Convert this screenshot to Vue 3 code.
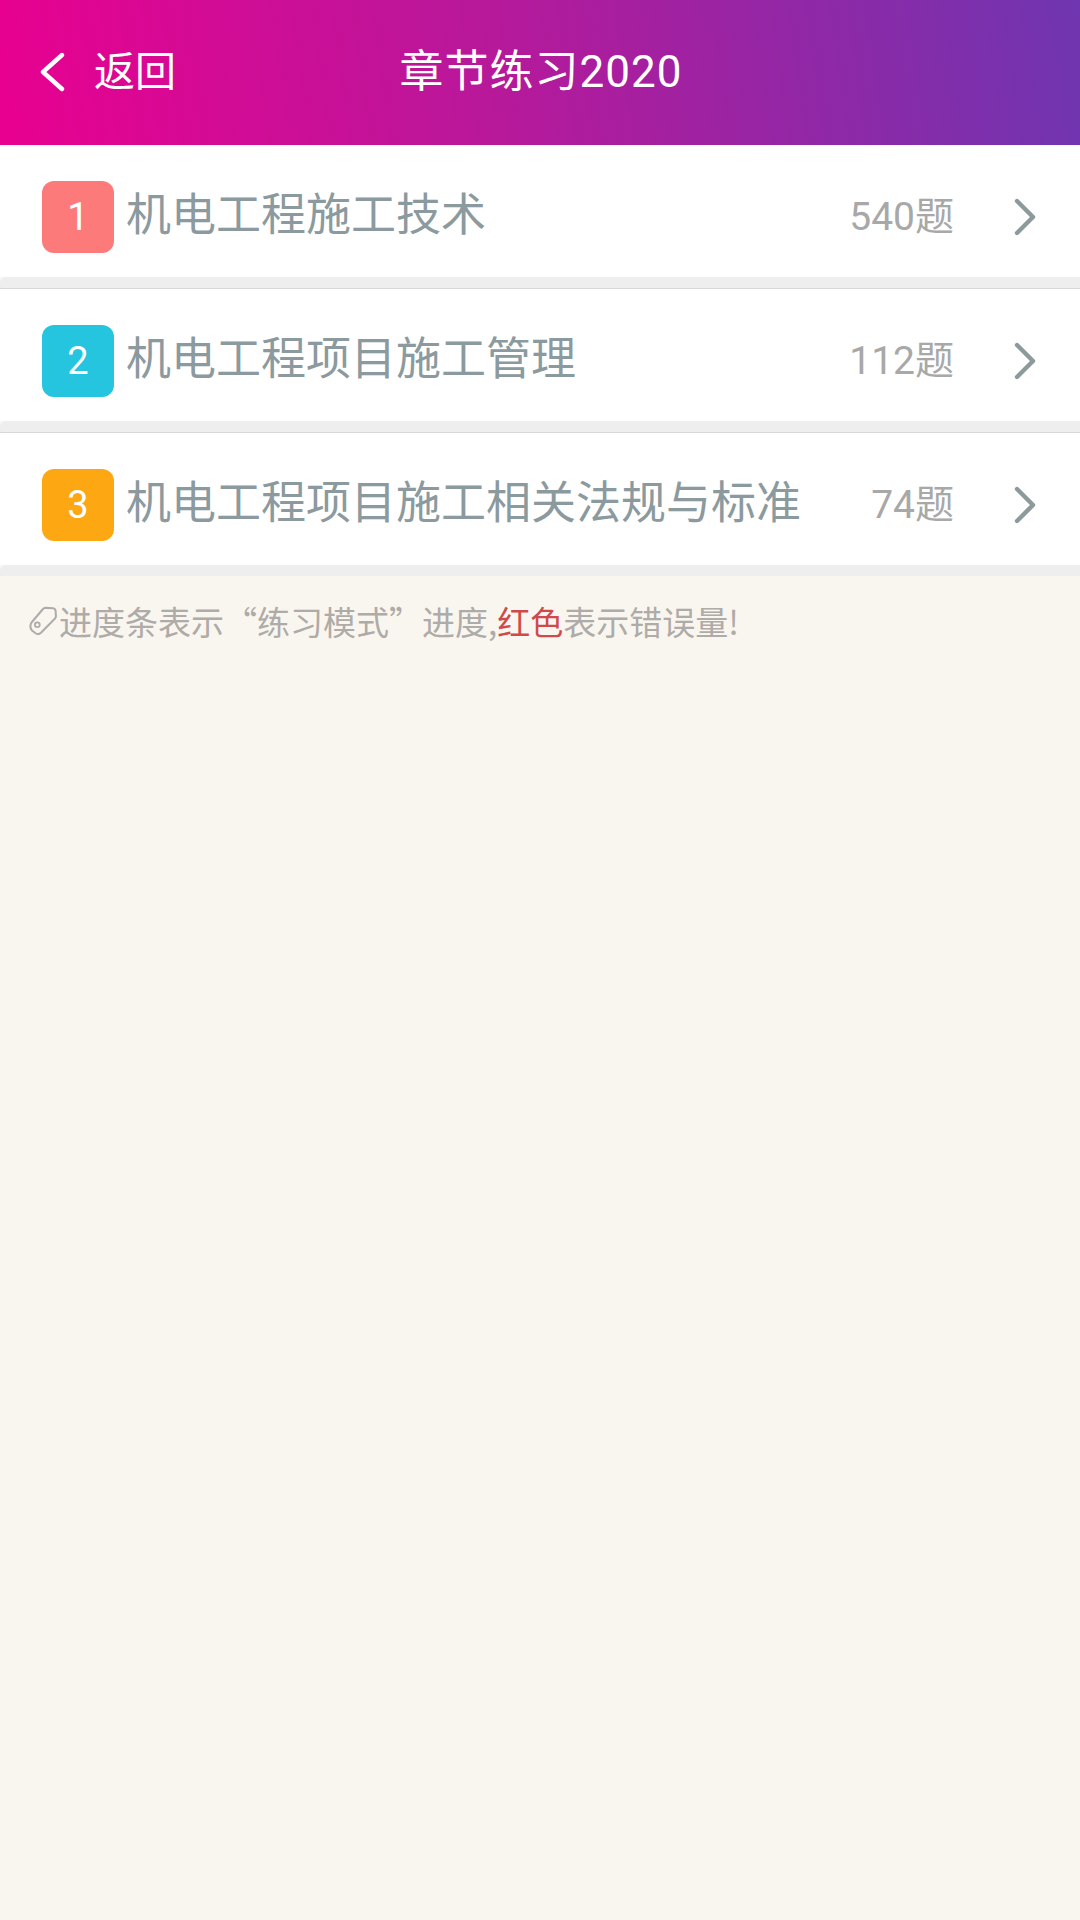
<script setup>
const items = [
  { n: 1, color: '#fd7a7a', title: '机电工程施工技术', count: '540题' },
  { n: 2, color: '#25c5e0', title: '机电工程项目施工管理', count: '112题' },
  { n: 3, color: '#fda713', title: '机电工程项目施工相关法规与标准', count: '74题' },
]
</script>

<template>
  <div class="page">
    <header class="bar">
      <div class="back">
        <svg class="back-icon" viewBox="0 0 26 40" width="26" height="40">
          <path d="M23 3 L4 20 L23 37" fill="none" stroke="#fff" stroke-width="4.4" stroke-linecap="round" stroke-linejoin="round" />
        </svg>
        <span>返回</span>
      </div>
      <div class="title">章节练习2020</div>
    </header>

    <ul class="list">
      <li v-for="it in items" :key="it.n" class="row">
        <div class="cell">
          <span class="badge" :style="{ background: it.color }">{{ it.n }}</span>
          <span class="name">{{ it.title }}</span>
          <span class="count">{{ it.count }}</span>
          <svg class="chev" viewBox="0 0 22 38" width="22" height="38">
            <path d="M3 3 L19 19 L3 35" fill="none" stroke="#8c9a9c" stroke-width="4.4" stroke-linecap="round" stroke-linejoin="round" />
          </svg>
        </div>
        <div class="gap"></div>
      </li>
    </ul>

    <p class="note">
      <svg class="tag" viewBox="0 0 28 30" width="28" height="30">
        <path d="M2.500 16.500 L14 3 Q15 1.800 16.500 1.800 L24 2.200 Q26.500 2.500 26.600 5 L26.900 10 Q27 11.500 26 12.500 L12 26.800 Q9.500 29 7 27.500 L3 24.500 Q0 21 2.500 16.500 Z" fill="none" stroke="#aeaba8" stroke-width="2" />
        <circle cx="8.300" cy="18.700" r="2.400" fill="none" stroke="#aeaba8" stroke-width="1.800" />
      </svg>
      <span>进度条表示“练习模式”进度,<em>红色</em>表示错误量!</span>
    </p>
  </div>
</template>

<style>
html, body { margin: 0; padding: 0; background: #f9f6ef; }
</style>

<style scoped>
.page {
  width: 1080px;
  height: 1920px;
  background: #f9f6ef;
  font-family: "Roboto", "Noto Sans CJK SC", sans-serif;
  overflow: hidden;
}
.bar {
  position: relative;
  height: 145px;
  display: flex;
  align-items: center;
  justify-content: center;
  color: #fff;
  background: linear-gradient(82deg, #e90090 0%, #b8189a 45%, #6f35b0 100%);
}
.back {
  position: absolute;
  left: 39px;
  top: 52px;
  display: flex;
  align-items: center;
  gap: 29px;
  font-size: 41px;
  line-height: 40px;
}
.title {
  font-size: 44px;
  letter-spacing: 1px;
  line-height: 50px;
  margin-bottom: 2px;
  margin-left: 2px;
}
.list {
  list-style: none;
  margin: 0;
  padding: 0;
}
.row {
  display: block;
}
.cell {
  height: 132px;
  background: #fff;
  display: flex;
  align-items: center;
  padding: 12px 44px 0 42px;
  box-sizing: border-box;
}
.gap {
  height: 11px;
  background: #eeeeee;
  border-bottom: 1px solid #d9d9d9;
  border-radius: 6px 0 0 0;
}
.row:last-child .gap {
  border-bottom: 0;
}
.badge {
  width: 72px;
  height: 72px;
  border-radius: 12px;
  flex: none;
  display: flex;
  align-items: center;
  justify-content: center;
  color: #fff;
  font-size: 38px;
  margin-right: 12px;
}
.name {
  flex: 1;
  font-size: 45px;
  color: #8b9a9e;
  white-space: nowrap;
  margin-top: -11px;
}
.count {
  font-size: 39px;
  color: #a8a8a8;
  margin-right: 60px;
  white-space: nowrap;
  margin-top: -9px;
}
.chev {
  flex: none;
}
.note {
  margin: 0;
  padding: 22px 0 0 29px;
  display: flex;
  align-items: center;
  gap: 2px;
  font-family: "Noto Sans CJK SC", sans-serif;
  font-size: 33px;
  line-height: 46px;
  color: #aeaba8;
}
.note em {
  font-style: normal;
  color: #cf4a4a;
}
.tag {
  flex: none;
}
</style>
